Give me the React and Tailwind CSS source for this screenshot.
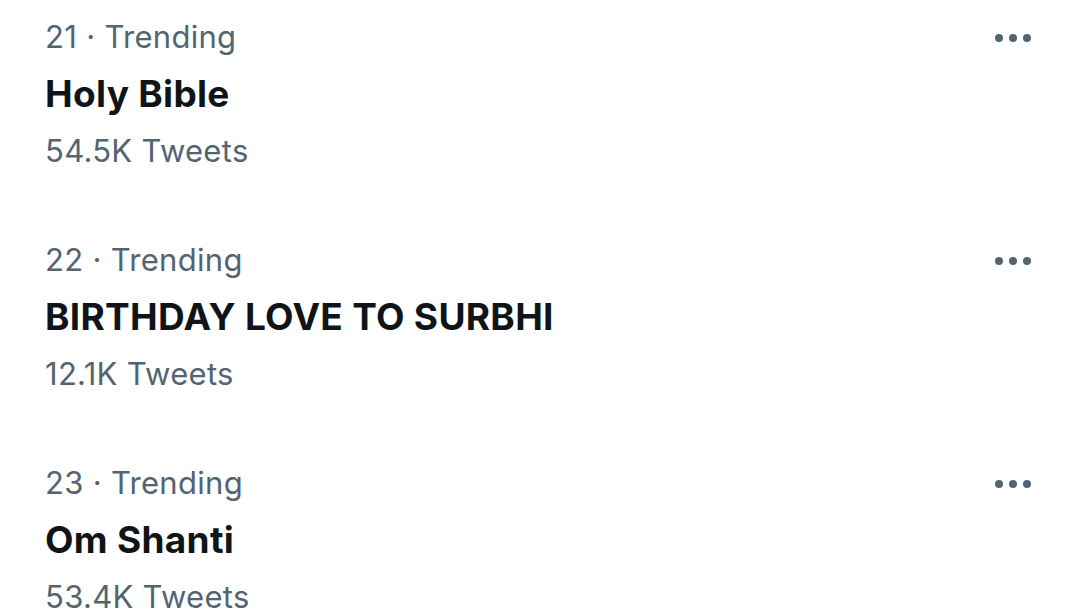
import React from "react";

const trends = [
  { rank: 21, title: "Holy Bible", count: "54.5K Tweets" },
  { rank: 22, title: "BIRTHDAY LOVE TO SURBHI", count: "12.1K Tweets" },
  { rank: 23, title: "Om Shanti", count: "53.4K Tweets" },
];

function MoreDots() {
  return (
    <div className="flex items-center gap-[6px] pt-[1px]">
      <span className="block h-[8px] w-[8px] rounded-full bg-[#536471]" />
      <span className="block h-[8px] w-[8px] rounded-full bg-[#536471]" />
      <span className="block h-[8px] w-[8px] rounded-full bg-[#536471]" />
    </div>
  );
}

function TrendRow({ rank, title, count }) {
  return (
    <div className="flex items-start justify-between pl-[45px] pr-[49px]">
      <div className="flex flex-col">
        <div className="h-[56px] leading-[56px] text-[31px] tracking-[0.3px] text-[#536471]">
          {rank} · Trending
        </div>
        <div className="h-[57px] leading-[57px] text-[37px] tracking-[0.3px] font-bold text-[#0f1419]">
          {title}
        </div>
        <div className="h-[57px] leading-[57px] text-[31px] tracking-[0.3px] text-[#536471]">
          {count}
        </div>
      </div>
      <div className="flex h-[56px] items-center">
        <MoreDots />
      </div>
    </div>
  );
}

export default function App() {
  return (
    <div
      className="h-[608px] w-[1080px] overflow-hidden bg-white pt-[9px]"
      style={{ fontFamily: "Inter, 'Noto Sans', sans-serif" }}
    >
      <div className="flex flex-col gap-[53px]">
        {trends.map((t) => (
          <TrendRow key={t.rank} {...t} />
        ))}
      </div>
    </div>
  );
}
